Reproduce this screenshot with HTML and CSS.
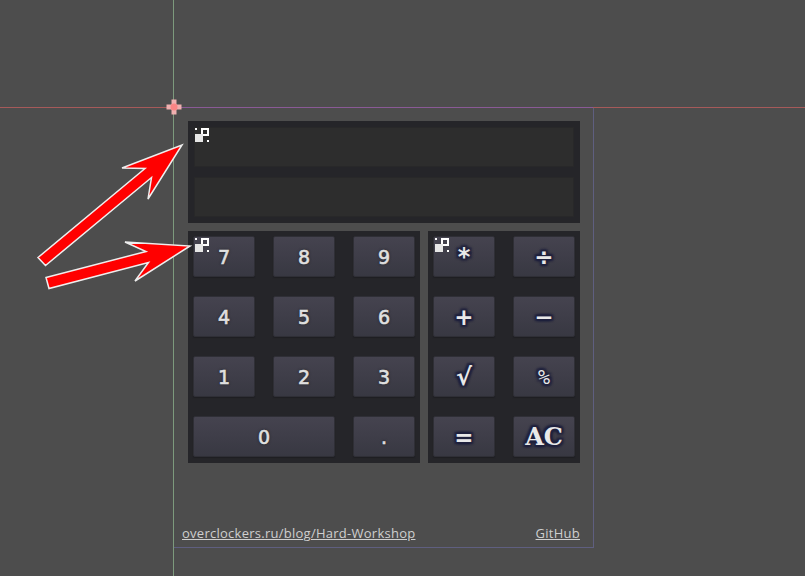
FILE: index.html
```html
<!DOCTYPE html>
<html lang="en">
<head>
    <meta charset="UTF-8">
    <meta name="viewport" content="width=device-width, initial-scale=1.0">
    <title>Calculator</title>
    <link rel="stylesheet" href="styles.css">
</head>
<body>
    <svg width="0" height="0" class="defs">
        <symbol id="anchor" viewBox="0 0 14 14">
            <path fill="#fff" d="M0 0h2v2H0zM12 12h2v2h-2zM6 0h8v8H8v-2h4V2H8v4H6z"/>
            <path fill="#e6e6e6" d="M0 6h8v8H0z"/>
        </symbol>
    </svg>

    <div class="guide guide-h"></div>
    <div class="guide guide-v"></div>

    <div class="stage">
        <div class="calculator">
            <div class="screen">
                <svg class="anchor"><use href="#anchor"/></svg>
                <div class="display"></div>
                <div class="display"></div>
            </div>
            <div class="keypads">
                <div class="keypad digits">
                    <svg class="anchor"><use href="#anchor"/></svg>
                    <button class="key" type="button">7</button>
                    <button class="key" type="button">8</button>
                    <button class="key" type="button">9</button>
                    <button class="key" type="button">4</button>
                    <button class="key" type="button">5</button>
                    <button class="key" type="button">6</button>
                    <button class="key" type="button">1</button>
                    <button class="key" type="button">2</button>
                    <button class="key" type="button">3</button>
                    <button class="key wide" type="button">0</button>
                    <button class="key" type="button">.</button>
                </div>
                <div class="keypad ops">
                    <svg class="anchor"><use href="#anchor"/></svg>
                    <button class="key op star" type="button">*</button>
                    <button class="key op" type="button">÷</button>
                    <button class="key op" type="button">+</button>
                    <button class="key op" type="button">−</button>
                    <button class="key op star" type="button">√</button>
                    <button class="key op percent" type="button">%</button>
                    <button class="key op" type="button">=</button>
                    <button class="key op clear" type="button">AC</button>
                </div>
            </div>
        </div>
        <div class="footer">
            <a href="#">overclockers.ru/blog/Hard-Workshop</a>
            <a href="#">GitHub</a>
        </div>
    </div>

    <svg class="crosshair" width="18" height="18" viewBox="0 0 18 18">
        <path fill="#efb0b0" d="M6.5 1.5h5v5h5v5h-5v5h-5v-5h-5v-5h5z"/>
        <circle cx="9" cy="9" r="3.5" fill="#fb8585"/>
    </svg>

    <svg class="arrows" width="200" height="300" viewBox="0 0 200 300">
        <path fill="#f00" stroke="#eee" stroke-width="1.5" d="M38 257.500 145 168.500 122 168 182 145 148 199 151.500 177.500 45.500 265.500Z"/>
        <path fill="#f00" stroke="#eee" stroke-width="1.500" d="M46 277.500 146 251.500 125 242 190 246 135 281 148.500 262.500 49 288.500Z"/>
    </svg>
</body>
</html>
```

FILE: styles.css
```css
body {
    margin: 0;
    height: 576px;
    overflow: hidden;
    background: #4d4d4d;
    font-family: 'DejaVu Sans', sans-serif;
}

.defs {
    position: absolute;
}

.guide {
    position: absolute;
}

.guide-h {
    left: 0;
    top: 107px;
    width: 805px;
    height: 1px;
    background: linear-gradient(to right, #a65a5a 173px, #8a5a96 173px, #8a5a96 593px, #a65a5a 593px);
}

.guide-v {
    left: 173px;
    top: 0;
    width: 1px;
    height: 576px;
    background: #7d9a7d;
}

.stage {
    box-sizing: border-box;
    width: 421px;
    height: 441px;
    margin: 107px 0 0 173px;
    padding: 14px 13px 0 15px;
    border-right: 1px solid #5f5f80;
    border-bottom: 1px solid #5f5f80;
    display: flex;
    flex-direction: column;
}

.screen {
    position: relative;
    background: #252529;
    padding: 6px;
    height: 102px;
    box-sizing: border-box;
    display: flex;
    flex-direction: column;
    gap: 10px;
}

.display {
    height: 40px;
    background: #2d2d2d;
    box-shadow: inset 0 0 0 1px #282829;
}

.keypads {
    display: flex;
    gap: 8px;
    margin-top: 8px;
}

.keypad {
    position: relative;
    background: #252529;
    padding: 5px;
    height: 232px;
    box-sizing: border-box;
    display: grid;
    grid-auto-rows: 41px;
    row-gap: 19px;
    column-gap: 18px;
}

.digits {
    width: 232px;
    grid-template-columns: repeat(3, 62px);
}

.ops {
    width: 152px;
    grid-template-columns: repeat(2, 62px);
}

.key {
    padding: 0;
    border: 1px solid #2f2f36;
    border-radius: 2px;
    background: linear-gradient(#45434f, #383842);
    box-shadow: 0 1px 1px #1e1e22;
    color: #e0e0e0;
    font-family: 'DejaVu Sans', sans-serif;
    font-size: 19px;
    font-weight: normal;
    -webkit-text-stroke: 0.6px #e0e0e0;
    text-shadow: 0 0 3px #2a2a30, 0 0 2px #2a2a30;
}

.wide {
    grid-column: span 2;
}

.op {
    font-size: 23px;
    font-weight: bold;
    color: #e8e8e8;
    -webkit-text-stroke: 0;
    text-shadow: 2px 0 2px #20223e, -2px 0 2px #20223e, 0 2px 2px #20223e, 0 -2px 2px #20223e, 2px 2px 2px #20223e, -2px -2px 2px #20223e, 2px -2px 2px #20223e, -2px 2px 2px #20223e;
}

.star {
    font-size: 24px;
}

.percent {
    font-family: 'DejaVu Sans Mono', monospace;
    font-size: 20px;
    font-weight: normal;
}

.clear {
    font-family: 'DejaVu Serif', serif;
    font-size: 24px;
}

.anchor {
    position: absolute;
    left: 7px;
    top: 7px;
    width: 14px;
    height: 14px;
}

.footer {
    margin-top: auto;
    margin-left: -6px;
    margin-bottom: 6px;
    display: flex;
    justify-content: space-between;
    font-family: 'Open Sans', sans-serif;
    font-size: 13px;
    font-weight: 400;
    line-height: 16px;
}

.footer a {
    color: #cfcfcf;
    letter-spacing: 0.26px;
}

.crosshair {
    position: absolute;
    left: 165px;
    top: 98px;
}

.arrows {
    position: absolute;
    left: 0;
    top: 0;
}
```
